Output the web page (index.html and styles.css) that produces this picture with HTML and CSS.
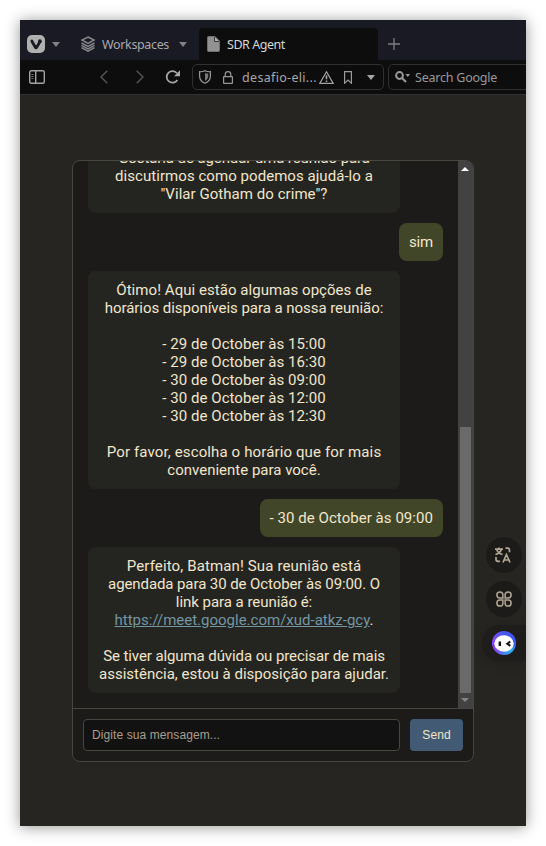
FILE: index.html
```html
<!DOCTYPE html>
<html lang="pt-BR">
<head>
<meta charset="utf-8">
<title>SDR Agent</title>
<link rel="stylesheet" href="styles.css">
</head>
<body>
<div class="window">
  <div class="tabs">
    <svg class="logo" width="18" height="18" viewBox="0 0 18 18"><rect width="18" height="18" rx="5" fill="#b0b0b1"/><path d="M4.8 6l3.5 6.2q.7 1.1 1.4 0L12.8 7" fill="none" stroke="#191a23" stroke-width="2.8" stroke-linecap="round"/><circle cx="12.9" cy="6.2" r="1.9" fill="#191a23"/></svg>
    <svg class="logo-caret" width="8" height="5" viewBox="0 0 8 5"><path d="M0 0h8L4 5z" fill="#818288"/></svg>
    <svg class="layers" width="16" height="16" viewBox="0 0 16 16" fill="none" stroke="#85868b" stroke-width="1.5"><path d="M8 1l6 3-6 3.300L2 4zM1.500 7L8 10.400 14.500 7M1.500 9.400L8 12.800l6.500-3.400M1.500 11.700L8 15.100l6.500-3.400"/></svg>
    <span class="workspaces">Workspaces</span>
    <svg class="ws-caret" width="8" height="5" viewBox="0 0 8 5"><path d="M0 0h8L4 5z" fill="#818288"/></svg>
    <div class="tab">
      <svg width="13" height="16" viewBox="0 0 13 16"><path d="M.5 1.500Q.5.5 1.500.5H8l4.500 4.500v9.500q0 1-1 1h-10q-1 0-1-1z" fill="#929292" stroke="#707070"/><path d="M7.500 1v4.500H12" fill="#b5b5b5" stroke="#333"/></svg>
      <span class="tab-title">SDR Agent</span>
    </div>
    <svg class="plus" width="12" height="12" viewBox="0 0 12 12"><path d="M6 0v12M0 6h12" stroke="#7e7f84" stroke-width="1.300"/></svg>
  </div>
  <div class="toolbar">
    <svg class="panel" width="16" height="14" viewBox="0 0 16 14" fill="none" stroke="#a2a2a2" stroke-width="1.400"><rect x=".7" y=".7" width="14.600" height="12.600" rx="1.500"/><path d="M6.700 1v12"/><path d="M2.300 4.500h2.200M2.300 6.500h2.200M2.300 8.500h2.200" stroke="#666" stroke-width="1"/></svg>
    <svg class="back" width="8" height="14" viewBox="0 0 8 14"><path d="M7.300.7L1 7l6.300 6.300" fill="none" stroke="#555" stroke-width="1.400"/></svg>
    <svg class="forward" width="8" height="14" viewBox="0 0 8 14"><path d="M.7.7L7 7 .7 13.300" fill="none" stroke="#555" stroke-width="1.400"/></svg>
    <svg class="reload" width="16" height="14" viewBox="0 0 16 14"><path d="M12 3.200A5.800 5.800 0 1 0 12.400 10" fill="none" stroke="#a9a9a9" stroke-width="1.700"/><path d="M15 .3v6H9z" fill="#a9a9a9"/></svg>
    <div class="address">
      <svg width="12" height="14" viewBox="0 0 12 14"><path d="M6 .7Q8.500 2 11.400 1.700V6q0 5-5.400 7.300Q.6 11 .6 6V1.700Q3.500 2 6 .7z" fill="none" stroke="#999" stroke-width="1.200"/><path d="M6 3q1.500.6 3.200.6V6q0 3.200-3.200 5z" fill="#777"/></svg>
      <svg class="lock" width="10" height="13" viewBox="0 0 10 13" fill="none" stroke="#999" stroke-width="1.200"><rect x=".6" y="5.600" width="8.800" height="6.800" rx=".5"/><path d="M2.200 5.500V3.400a2.800 2.800 0 0 1 5.600 0v2.100"/></svg>
      <span class="url">desafio-eli...</span>
      <svg class="warn" width="15" height="13" viewBox="0 0 15 13"><path d="M7.500.8l6.700 11.600H.8z" fill="none" stroke="#a2a2a2" stroke-width="1.200"/><path d="M7.500 4.300v4M7.500 9.400v1.600" stroke="#a2a2a2" stroke-width="1.600"/></svg>
      <svg class="mark" width="8" height="13" viewBox="0 0 8 13"><path d="M.6.600h6.800v11.600L4 9 .6 12.200z" fill="none" stroke="#999" stroke-width="1.200"/></svg>
      <svg class="menu" width="8" height="5" viewBox="0 0 8 5"><path d="M0 0h8L4 5z" fill="#a5a5a5"/></svg>
    </div>
    <div class="search">
      <svg width="16" height="12" viewBox="0 0 16 12"><circle cx="4.500" cy="4.500" r="3.400" fill="none" stroke="#999" stroke-width="2"/><path d="M7 7l4 4" stroke="#999" stroke-width="2.200"/><path d="M10.500 3H15l-2.200 3z" fill="#999"/></svg>
      <span>Search Google</span>
    </div>
  </div>
  <main class="page">
    <section class="chat">
      <div class="history">
        <div class="messages">
          <p class="bubble bot"><span class="tight">Gostaria de agendar uma reunião para</span><br><span class="slightly-loose">discutirmos como podemos ajudá-lo a</span><br><span class="slightly-loose">"Vilar Gotham do crime"?</span></p>
          <p class="bubble user short">sim</p>
          <p class="bubble bot"><span class="slightly-loose">Ótimo! Aqui estão algumas opções de</span><br><span class="slightly-tight">horários disponíveis para a nossa reunião:</span><br><br><span class="slightly-loose">- 29 de October às 15:00<br>- 29 de October às 16:30<br>- 30 de October às 09:00<br>- 30 de October às 12:00<br>- 30 de October às 12:30</span><br><br><span class="loose">Por favor, escolha o horário que for mais</span><br>conveniente para você.</p>
          <p class="bubble user slightly-loose">- 30 de October às 09:00</p>
          <p class="bubble bot"><span class="loose">Perfeito, Batman! Sua reunião está</span><br><span class="tight">agendada para 30 de October às 09:00. O</span><br><span class="slightly-tight">link para a reunião é:</span><br><a>https://meet.google.com/xud-atkz-gcy</a>.<br><br><span class="tight">Se tiver alguma dúvida ou precisar de mais</span><br>assistência, estou à disposição para ajudar.</p>
        </div>
        <div class="scrollbar">
          <svg width="8" height="4" viewBox="0 0 8 4"><path d="M0 4h8L4 0z" fill="#fff"/></svg>
          <div class="thumb"></div>
          <svg width="8" height="4" viewBox="0 0 8 4"><path d="M0 0h8L4 4z" fill="#858585"/></svg>
        </div>
      </div>
      <form class="composer">
        <input type="text" placeholder="Digite sua mensagem...">
        <button type="button">Send</button>
      </form>
    </section>
  </main>
  <aside class="tools">
    <div class="tool"><svg width="16" height="16" viewBox="0 0 16 16" fill="none" stroke="#b2a794" stroke-width="1.700"><path d="M0 2.200h8M4 .4v1.800M1.700 2.500Q3 6.200 7.500 7.500M6.400 2.500Q5 6.200.5 7.500M10.500 1.200h2q2 0 2 2v2M1 10v2.300q0 2 2 2h2M8 15.500l3.400-8 3.600 8M9.200 13h4.600"/></svg></div>
    <div class="tool"><svg width="16" height="16" viewBox="0 0 16 16" fill="none" stroke="#b2a794" stroke-width="1.500"><path d="M6.900 6.900H3.800a3 3 0 1 1 3.100-3.100zM9.100 6.900V3.800a3 3 0 1 1 3.100 3.100zM6.900 9.100v3.100a3 3 0 1 1-3.100-3.100zM9.100 9.100h3.100a3 3 0 1 1-3.100 3.100z"/></svg></div>
    <div class="assistant"><div class="ring"><svg width="20" height="17" viewBox="0 0 20 17"><ellipse cx="10" cy="8.500" rx="9.700" ry="8.200" fill="#fff"/><path d="M5.800 6.500v4.500" stroke="#111" stroke-width="2.400"/><path d="M16.300 6.500l-3 2.200 3 2.200" fill="none" stroke="#111" stroke-width="2"/></svg></div></div>
  </aside>
</div>
</body>
</html>
```
FILE: styles.css
```css
* { box-sizing: border-box; }
body { margin: 0; padding: 20px; background: #fff; overflow: hidden; }
svg { display: block; flex: none; }

.window {
  position: relative;
  width: 506px;
  height: 806px;
  display: flex;
  flex-direction: column;
  overflow: hidden;
  background: #262521;
  box-shadow: 0 1px 14px rgba(0, 0, 0, .42);
  font: 12.5px "Noto Sans", sans-serif;
}

.tabs { height: 40px; flex: none; display: flex; align-items: center; padding: 8px 0 0 7px; background: #191a23; }
.logo-caret { margin-left: 7px; }
.layers { margin-left: 20px; }
.workspaces { margin-left: 6px; width: 68px; color: #a7a8ad; letter-spacing: -.35px; white-space: nowrap; }
.ws-caret { margin-left: 9px; }
.tab { display: flex; align-items: center; gap: 7px; width: 179px; height: 32px; margin-left: 12px; padding-left: 8px; border-radius: 4px 4px 0 0; background: #0d0d0d; color: #d6d6d6; white-space: nowrap; }
.tab-title { letter-spacing: -.45px; }
.plus { margin-left: 10px; }

.toolbar { height: 35px; flex: none; display: flex; align-items: center; padding-left: 9px; background: #0d0d0d; border-bottom: 1px solid #303030; }
.back { margin-left: 55px; }
.forward { margin-left: 28px; }
.reload { margin-left: 21px; }
.address { width: 192px; height: 26px; flex: none; display: flex; align-items: center; margin-left: 11px; padding-left: 6px; border: 1px solid #303030; border-radius: 5px; }
.lock { margin-left: 12px; }
.url { margin-left: 9px; width: 76px; color: #a8a8a8; letter-spacing: .32px; white-space: nowrap; }
.warn { margin-left: 1px; }
.mark { margin-left: 10px; }
.menu { margin-left: 15px; }
.search { width: 150px; height: 26px; flex: none; display: flex; align-items: center; gap: 4px; margin-left: 4px; padding-left: 6px; border: 1px solid #303030; border-radius: 5px; color: #999; letter-spacing: -.22px; white-space: nowrap; }

.page { flex: 1; padding: 65px 52px 64px; }
.chat { width: 402px; height: 602px; display: flex; flex-direction: column; overflow: hidden; border: 1px solid #47463f; border-radius: 8px; background: #1c1b19; }
.history { flex: 1; min-height: 0; display: flex; }
.messages { flex: 1; display: flex; flex-direction: column; justify-content: flex-end; gap: 10px; padding: 0 15px 15px; overflow: hidden; }
.bubble { flex: none; margin: 0; padding: 10px; border-radius: 8px; font: 15px/18px Roboto, sans-serif; color: #f2e6cb; text-align: center; white-space: nowrap; }
.bot { align-self: flex-start; width: 312px; background: #242521; }
.user { align-self: flex-end; background: #414629; }
.short { width: 44px; letter-spacing: -.2px; }
.tight { letter-spacing: -.09px; }
.slightly-tight { letter-spacing: -.04px; }
.slightly-loose { letter-spacing: .05px; }
.loose { letter-spacing: .13px; }
.bubble a { color: #7595a2; text-decoration: underline; }
.scrollbar { width: 15px; display: flex; flex-direction: column; align-items: center; padding: 6px 1px 6px 0; background: #424242; }
.thumb { width: 11px; height: 266px; margin: auto 0 5px; background: #6a6a6a; }

.composer { height: 53px; flex: none; display: flex; gap: 10px; padding: 10px; border-top: 1px solid #47463f; }
.composer input { width: 317px; height: 32px; padding: 0 8px; border: 1px solid #47463f; border-radius: 4px; background: #121212; font: 12px "Liberation Sans", sans-serif; letter-spacing: .09px; }
.composer input::placeholder { color: #a99f8b; opacity: 1; }
.composer button { width: 53px; height: 32px; padding: 0; border: 0; border-radius: 4px; background: #425a74; color: #f2e6cb; font: 12px "Liberation Sans", sans-serif; letter-spacing: .1px; }

.tools { position: absolute; right: 0; top: 517px; width: 44px; }
.tool { width: 36px; height: 36px; display: flex; align-items: center; justify-content: center; margin: 0 0 8px 4px; border-radius: 50%; background: #1c1b19; }
.tool:first-child svg { margin-right: 2px; }
.assistant { height: 36px; padding: 6px 0 0 10px; border-radius: 18px 0 0 18px; background: #1e1d1b; box-shadow: 0 2px 12px rgba(0, 0, 0, .2); }
.ring { width: 24px; height: 24px; display: flex; align-items: center; justify-content: center; border-radius: 50%; background: conic-gradient(#4657f2, #3f55f5 25%, #24b5ec 38%, #4a80f0 50%, #8c3df0 65%, #8548f0 80%, #4657f2); }
```
